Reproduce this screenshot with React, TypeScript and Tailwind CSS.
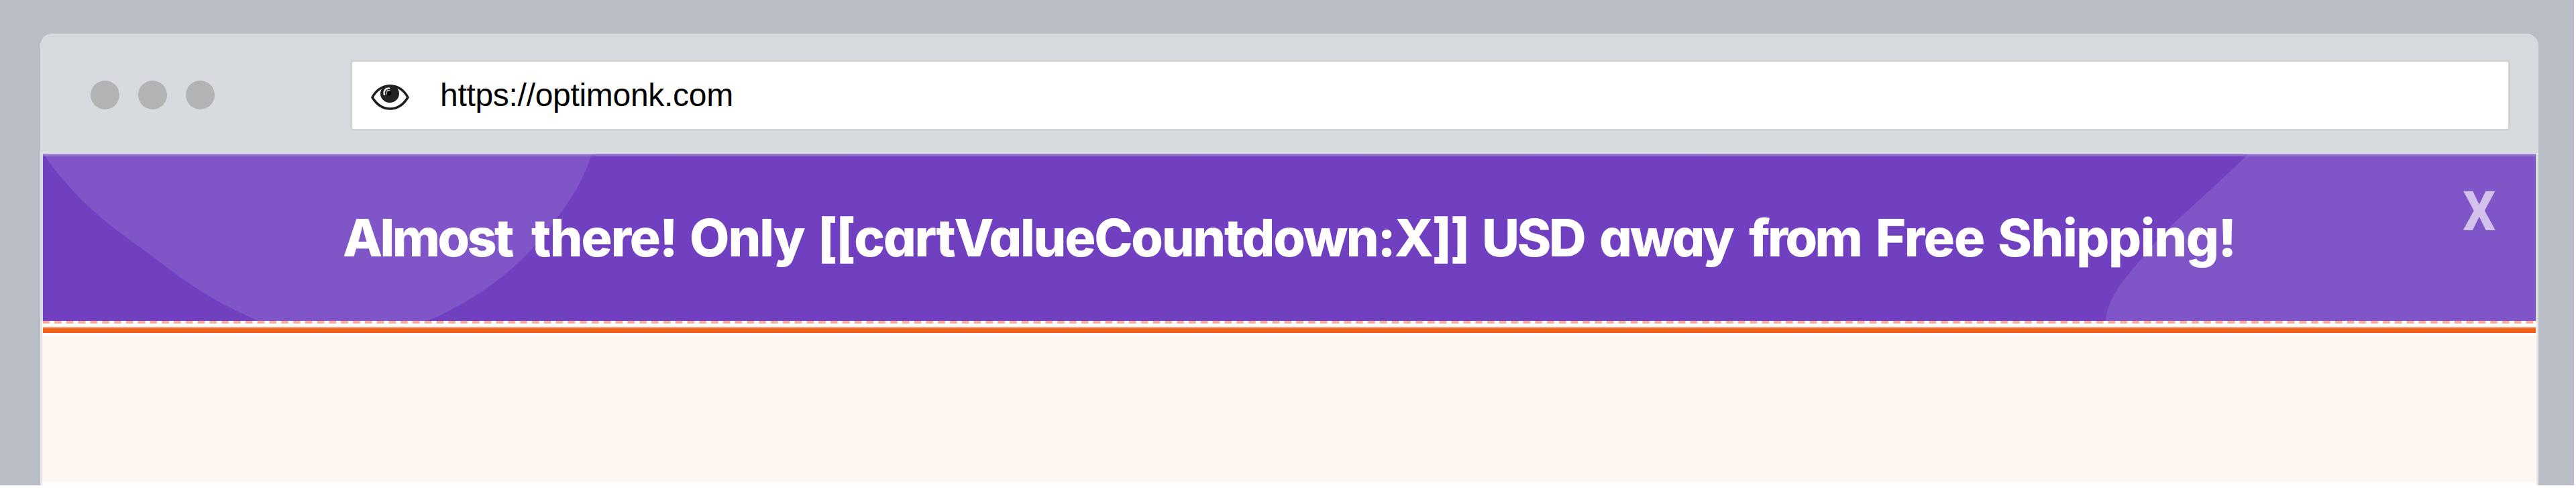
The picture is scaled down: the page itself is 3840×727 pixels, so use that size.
const headline = [
  { text: "Almost", cls: "w-[281px] tracking-[-3.66px]" },
  { text: "there!", cls: "w-[236px] tracking-[-2.06px]" },
  { text: "Only", cls: "w-[191px] tracking-[-2.07px]" },
  { text: "[[cartValueCountdown:X]]", cls: "w-[990px] tracking-[-2.26px]" },
  { text: "USD", cls: "w-[175px] tracking-[-3.45px]" },
  { text: "away", cls: "w-[223px] tracking-[-3.2px]" },
  { text: "from", cls: "w-[189px] tracking-[-3.6px]" },
  { text: "Free", cls: "w-[182px] tracking-[-1.1px]" },
  { text: "Shipping!", cls: "w-[360px] tracking-[-1.4px]" },
];

function EyeIcon() {
  return (
    <svg className="h-[38px] w-[57px] shrink-0" viewBox="553 126 57 38" fill="none">
      <path
        d="M555 145C561 134 570 128 581.500 128C593 128 602 134 608 145C602 155 593 162 581.500 162C570 162 561 155 555 145Z"
        stroke="#1c1c1c"
        strokeWidth="3.500"
      />
      <ellipse cx="581" cy="139.500" rx="14" ry="13.500" fill="#222" />
      <path d="M573 141C571.500 136 574 131.500 580 131.500" stroke="#e8e8e8" strokeWidth="2.500" strokeLinecap="round" />
      <path d="M577 133.500L582 134.500L578 140L574.500 141Z" fill="#aaa" />
      <circle cx="580" cy="139" r="3.200" fill="#000" />
    </svg>
  );
}

function BrowserBar() {
  return (
    <div className="flex h-[179px] items-start rounded-t-[18px] border-b-3 border-[#d9e0df] bg-[#d7dbe0] pr-[42px] pl-[75px]">
      <div className="mt-[70px] flex w-[387px] gap-[28px]">
        <span className="size-[43px] rounded-full bg-[#b3b3b3]" />
        <span className="size-[43px] rounded-full bg-[#b3b3b3]" />
        <span className="size-[43px] rounded-full bg-[#b3b3b3]" />
      </div>
      <div className="mt-[39px] flex h-[106px] flex-1 items-center rounded-[5px] border-3 border-[#d0d2d3] bg-white pl-[28px]">
        <div className="pt-[6px]">
          <EyeIcon />
        </div>
        <span className="ml-[46px] font-['Liberation_Sans',Arial,sans-serif] text-[48px] leading-[100px] tracking-[-0.3px] text-black">
          https://optimonk.com
        </span>
      </div>
    </div>
  );
}

function Banner() {
  return (
    <div className="relative flex h-[249px] items-center bg-[#7040c0] pl-[447px]">
      <svg className="absolute inset-0 size-full" viewBox="64 229 3716 249" preserveAspectRatio="none" fill="#8055c8">
        <path d="M65 229C80 253 98 273 124 300C163 339 208 366 251 400C297 435 340 459 385 478H637C714 446 783 394 832 323C856 290 872 262 882 229Z" />
        <path d="M3780 229H3352L3298 280L3240 333C3222 351 3205 368 3191 387C3162 420 3141 447 3139 478H3780Z" />
      </svg>
      <div className="absolute inset-x-0 top-0 h-[5px] bg-linear-to-b from-[#b49fdd]/80 to-transparent" />
      <h1 className="relative flex font-['Inter',sans-serif] text-[77px] leading-[94px] font-extrabold text-white [font-feature-settings:'cv11']">
        {headline.map(({ text, cls }) => (
          <span key={text} className={`whitespace-nowrap ${cls}`}>
            {text}
          </span>
        ))}
      </h1>
      <button className="absolute top-[47px] right-[60px] w-[50px] scale-x-95 text-center font-['Roboto',sans-serif] text-[81px] leading-[80px] font-extrabold text-[#d2c1ea]">
        X
      </button>
    </div>
  );
}

export default function App() {
  return (
    <div className="h-[727px] w-[3840px] bg-white">
      <div className="flex h-[723px] w-[3837px] flex-col bg-[#b8bdc6] pt-[50px] pr-[53px] pl-[60px]">
        <BrowserBar />
        <div className="border-x-4 border-[#d9dedf]">
          <Banner />
        </div>
        <div className="border-x-3 border-[#e6e8e8] bg-white">
          <div className="mx-px h-[4px] bg-[repeating-linear-gradient(90deg,#f9ab9c_0px,#f9ab9c_9px,#ffffff_11px,#ffffff_16px,#f9ab9c_17.8px)]" />
          <div className="mx-px mt-[5px] h-[2px] bg-[#f5a27a]" />
          <div className="mx-px h-[7px] bg-[#f26019]" />
          <div className="mt-[4px] h-[218px] bg-[#fef6f1]" />
          <div className="h-[5px] bg-white" />
        </div>
      </div>
    </div>
  );
}
